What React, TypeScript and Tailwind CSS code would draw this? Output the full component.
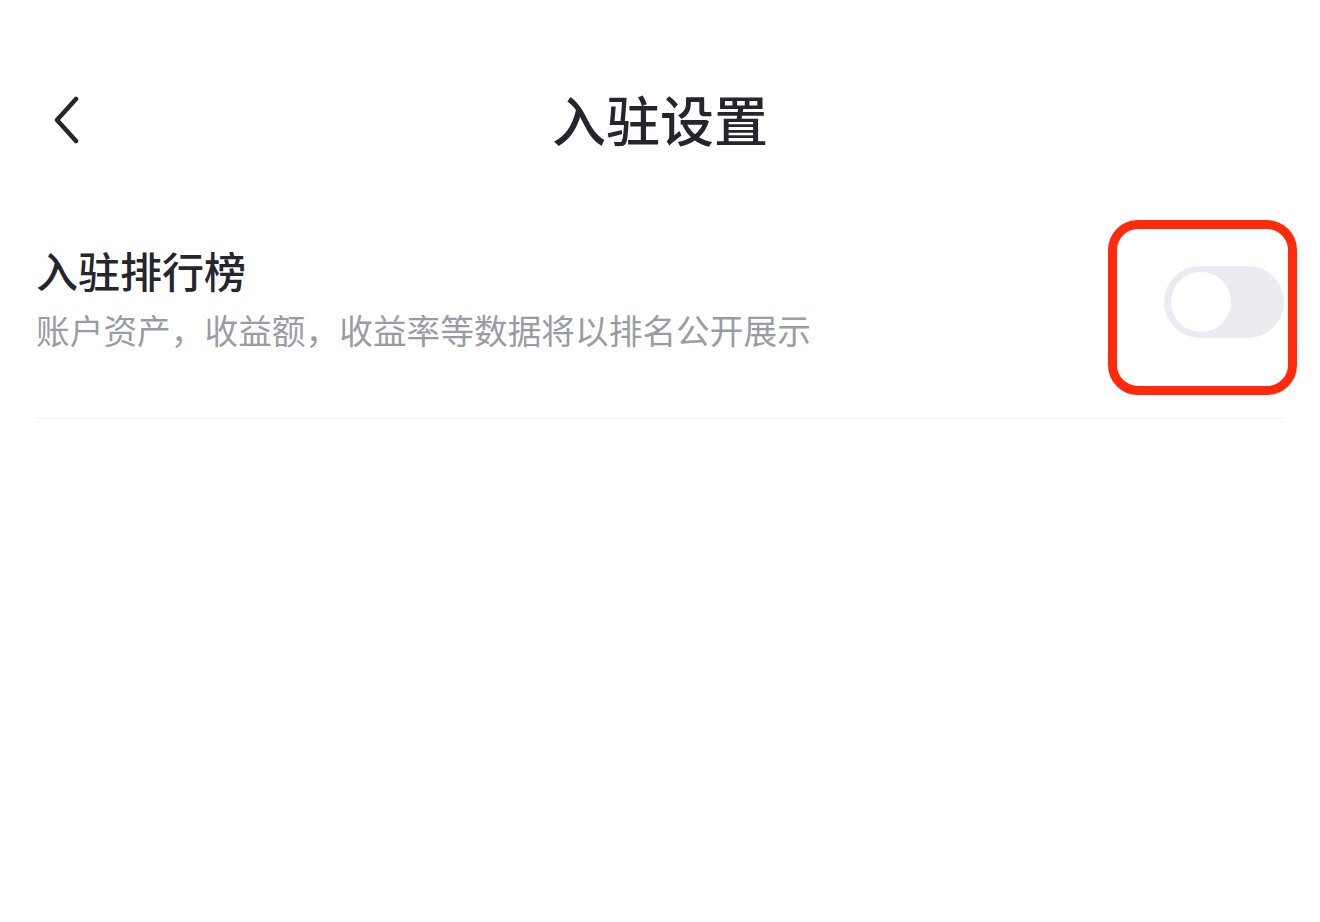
const cjk = { fontFamily: '"Noto Sans CJK SC", "Noto Sans", sans-serif' };

function BackIcon() {
  return (
    <svg width="32" height="48" viewBox="0 0 32 48" fill="none">
      <path d="M26 3 L7 24 L26 45" stroke="#25262d" strokeWidth="4.5" strokeLinecap="round" strokeLinejoin="round" />
    </svg>
  );
}

function Toggle() {
  return (
    <div className="relative mt-[7px]">
      <div className="w-[120px] h-[72px] rounded-full bg-[#ebecf1] flex items-center px-[7px]">
        <div className="w-[60px] h-[60px] rounded-full bg-white" />
      </div>
      <div className="absolute left-[-56px] top-[-46px] w-[189px] h-[175px] rounded-[30px] border-[9px] border-[#ff2a0a]" />
    </div>
  );
}

export default function App() {
  return (
    <div className="min-h-screen bg-white pt-[69px]" style={cjk}>
      <div className="relative flex items-center justify-center h-[100px] px-9">
        <button className="absolute left-[50px] top-1/2 -translate-y-1/2 mt-[1px]">
          <BackIcon />
        </button>
        <h1 className="text-[54px] leading-none font-medium text-[#25262d]">入驻设置</h1>
      </div>

      <div className="mx-9 flex items-center justify-between border-b border-[#eeeff2] pt-[75px] pb-[66px]">
        <div className="flex flex-col gap-[12px]">
          <div className="text-[42px] leading-[52px] font-medium text-[#25262d]">入驻排行榜</div>
          <div className="text-[33.7px] leading-[44px] text-[#9a9ca5]">账户资产，收益额，收益率等数据将以排名公开展示</div>
        </div>
        <Toggle />
      </div>
    </div>
  );
}
